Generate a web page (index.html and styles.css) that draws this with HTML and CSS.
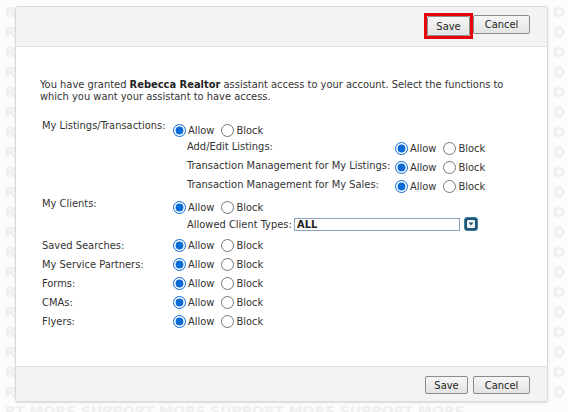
FILE: index.html
```html
<!DOCTYPE html>
<html lang="en">
<head>
<meta charset="utf-8">
<title>Assistant Access</title>
<link rel="stylesheet" href="styles.css">
</head>
<body>
<div class="page">
  <div class="wm wm-left" aria-hidden="true">R R R R R R R R R R R R R R R R R R R R</div>

  <div class="dialog">
    <div class="bar bar-top">
      <span class="highlight"><button class="btn btn-save-top" type="button">Save</button></span>
      <button class="btn btn-cancel btn-cancel-top" type="button">Cancel</button>
    </div>

    <div class="content">
      <p class="intro">You have granted <b>Rebecca Realtor</b> assistant access to your account. Select the functions to which you want your assistant to have access.</p>

      <div class="perms">
        <div class="row row-group">
          <div class="lbl">My Listings/Transactions:</div>
          <div class="col">
            <div class="opts opts-listings">
              <input type="radio" name="listings" checked><span class="opt-text">Allow</span>
              <input type="radio" name="listings"><span class="opt-text">Block</span>
            </div>
            <div class="sub">
              <div class="subrow">
                <div class="sublbl">Add/Edit Listings:</div>
                <div class="opts opts-sub">
                  <input type="radio" name="addedit" checked><span class="opt-text">Allow</span>
                  <input type="radio" name="addedit"><span class="opt-text">Block</span>
                </div>
              </div>
              <div class="subrow">
                <div class="sublbl">Transaction Management for My Listings:</div>
                <div class="opts opts-sub">
                  <input type="radio" name="tmlist" checked><span class="opt-text">Allow</span>
                  <input type="radio" name="tmlist"><span class="opt-text">Block</span>
                </div>
              </div>
              <div class="subrow">
                <div class="sublbl">Transaction Management for My Sales:</div>
                <div class="opts opts-sub">
                  <input type="radio" name="tmsales" checked><span class="opt-text">Allow</span>
                  <input type="radio" name="tmsales"><span class="opt-text">Block</span>
                </div>
              </div>
            </div>
          </div>
        </div>

        <div class="row row-group">
          <div class="lbl">My Clients:</div>
          <div class="col">
            <div class="opts opts-clients">
              <input type="radio" name="clients" checked><span class="opt-text">Allow</span>
              <input type="radio" name="clients"><span class="opt-text">Block</span>
            </div>
            <div class="types">
              <span class="types-lbl">Allowed Client Types:</span>
              <input class="types-input" type="text" value="ALL" readonly>
              <svg class="dd" width="14" height="14" viewBox="0 0 14 14" aria-hidden="true">
                <rect x="0.5" y="0.5" width="13" height="13" rx="2.5" fill="#1b5877" stroke="#3f7d9a"/>
                <rect x="3" y="3" width="8" height="8" rx="1" fill="#eef3f6"/>
                <polygon points="4.6,5.6 9.4,5.6 7,8.6" fill="#1b4f6a"/>
              </svg>
            </div>
          </div>
        </div>

        <div class="row">
          <div class="lbl">Saved Searches:</div>
          <div class="opts">
            <input type="radio" name="saved" checked><span class="opt-text">Allow</span>
            <input type="radio" name="saved"><span class="opt-text">Block</span>
          </div>
        </div>
        <div class="row">
          <div class="lbl">My Service Partners:</div>
          <div class="opts">
            <input type="radio" name="partners" checked><span class="opt-text">Allow</span>
            <input type="radio" name="partners"><span class="opt-text">Block</span>
          </div>
        </div>
        <div class="row">
          <div class="lbl">Forms:</div>
          <div class="opts">
            <input type="radio" name="forms" checked><span class="opt-text">Allow</span>
            <input type="radio" name="forms"><span class="opt-text">Block</span>
          </div>
        </div>
        <div class="row">
          <div class="lbl">CMAs:</div>
          <div class="opts">
            <input type="radio" name="cmas" checked><span class="opt-text">Allow</span>
            <input type="radio" name="cmas"><span class="opt-text">Block</span>
          </div>
        </div>
        <div class="row">
          <div class="lbl">Flyers:</div>
          <div class="opts">
            <input type="radio" name="flyers" checked><span class="opt-text">Allow</span>
            <input type="radio" name="flyers"><span class="opt-text">Block</span>
          </div>
        </div>
      </div>
    </div>

    <div class="bar bar-bottom">
      <button class="btn btn-save" type="button">Save</button>
      <button class="btn btn-cancel" type="button">Cancel</button>
    </div>
  </div>

  <div class="wm wm-right" aria-hidden="true">O O O O O O O O O O O O O O O O O O O O</div>

  <div class="wm wm-bottom" aria-hidden="true">RT MORE SUPPORT MORE SUPPORT MORE SUPPORT MORE</div>
</div>
</body>
</html>
```

FILE: styles.css
```css
html, body {
  margin: 0;
  padding: 0;
}

body {
  width: 568px;
  height: 412px;
  overflow: hidden;
  background: #fcfcfc;
  font-family: "DejaVu Sans Condensed", "DejaVu Sans", sans-serif;
  font-size: 11px;
  color: #333;
}

.page {
  display: grid;
  grid-template-columns: 15px 533px 20px;
  grid-template-rows: 396px 10px;
  padding-top: 6px;
  width: 568px;
  height: 412px;
  box-sizing: border-box;
}

/* faint background watermark, only where the dialog does not cover it */
.wm {
  overflow: hidden;
  font: bold 14px "DejaVu Sans", sans-serif;
  line-height: 20px;
  color: #efefef;
}

.wm-left {
  padding: 0 0 0 5px;
  margin-top: -4px;
  height: 400px;
}

.wm-right {
  padding: 0 0 0 5px;
  margin-top: -4px;
  height: 400px;
}

.wm-bottom {
  grid-column: 1 / 4;
  padding-left: 5px;
  margin-top: -1px;
  white-space: nowrap;
}

.dialog {
  width: 533px;
  height: 396px;
  box-sizing: border-box;
  border: 1px solid #d9d9d9;
  border-radius: 3px;
  background: #fff;
  box-shadow: 0 1px 2px rgba(0, 0, 0, 0.12);
  display: flex;
  flex-direction: column;
  overflow: hidden;
}

.bar {
  display: flex;
  justify-content: flex-end;
  align-items: flex-start;
  background: #f3f3f3;
  box-sizing: border-box;
  flex: none;
}

.bar-top {
  height: 40px;
  padding: 6px 17px 0 0;
  border-bottom: 1px solid #e0e0e0;
}

.bar-bottom {
  height: 35px;
  padding: 9px 17px 0 0;
  border-top: 1px solid #e0e0e0;
  gap: 5px;
}

.highlight {
  display: flex;
  border: 3px solid #e8000b;
}

.btn {
  font-family: "DejaVu Sans Condensed", "DejaVu Sans", sans-serif;
  font-size: 11px;
  color: #1e1e1e;
  background: linear-gradient(#f6f6f6, #e3e3e3);
  border: 1px solid #8c8c8c;
  border-radius: 2px;
  padding: 0;
  margin: 0;
  box-sizing: border-box;
  line-height: 1;
}

.btn-save-top {
  width: 43px;
  height: 20px;
}

.btn-save {
  width: 43px;
  height: 18px;
}

.btn-cancel {
  width: 57px;
  height: 18px;
}

.btn-cancel.btn-cancel-top {
  margin-top: 2px;
  height: 19px;
}

.content {
  flex: 1;
  padding: 32px 24px 0 24px;
}

.intro {
  margin: 0 0 15px;
  line-height: 12px;
}

.intro b {
  font-weight: bold;
  color: #222;
}

.perms {
  margin-left: 2px;
}

.row {
  display: flex;
  align-items: flex-start;
  height: 19px;
}

.row.row-group {
  height: auto;
}

.lbl {
  width: 131px;
  flex: none;
  line-height: 15px;
  padding-top: 2px;
}

.row-group > .lbl {
  padding-top: 0;
}

.col {
  display: flex;
  flex-direction: column;
}

.opts {
  display: flex;
  align-items: center;
  height: 15px;
  line-height: 15px;
  padding-top: 2px;
  white-space: nowrap;
}

.opts input[type="radio"] {
  width: 13px;
  height: 13px;
  margin: 0 2px 0 0;
  accent-color: #0b6bd6;
}

.opt-text {
  margin-right: 7px;
}

.opts-listings {
  padding: 5px 0 1px;
}

.opts-clients {
  padding: 4px 0 0;
}

.sub {
  padding-left: 14px;
}

.subrow {
  display: flex;
  align-items: flex-start;
  height: 19px;
}

.sublbl {
  width: 208px;
  flex: none;
  line-height: 15px;
  white-space: nowrap;
}

.opts-sub {
  padding-top: 2px;
}

.types {
  display: flex;
  align-items: flex-start;
  height: 21px;
  padding-left: 14px;
}

.types-lbl {
  width: 107px;
  flex: none;
  line-height: 15px;
  padding-top: 2px;
  white-space: nowrap;
}

.types-input {
  width: 166px;
  height: 13px;
  margin: 3px 0 0;
  box-sizing: border-box;
  border: 1px solid #8aa3bd;
  padding: 0 2px;
  font-family: "DejaVu Sans Condensed", "DejaVu Sans", sans-serif;
  font-size: 11px;
  font-weight: bold;
  color: #222;
  line-height: 11px;
  background: #fff;
  outline: none;
}

.dd {
  margin: 2px 0 0 4px;
  flex: none;
}
```
